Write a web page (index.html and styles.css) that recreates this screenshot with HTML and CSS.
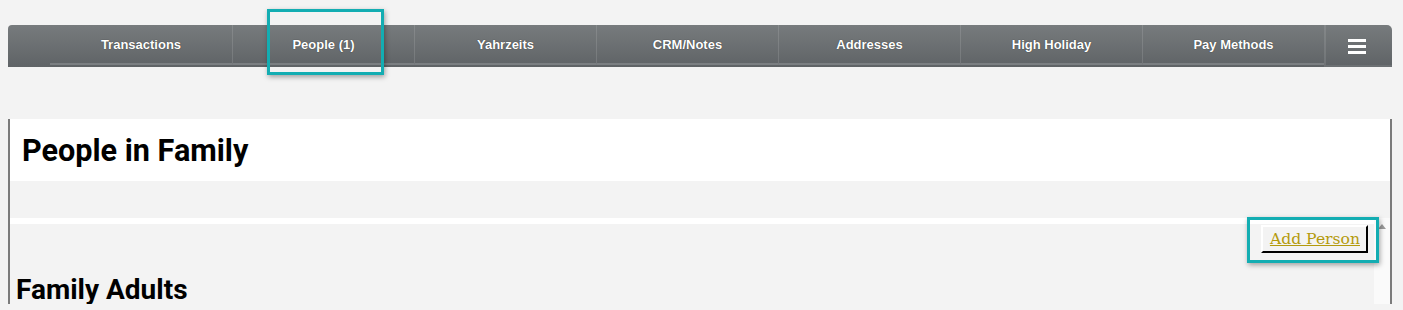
FILE: index.html
```html
<!DOCTYPE html>
<html lang="en">
<head>
  <meta charset="UTF-8" />
  <title>People in Family</title>
  <link rel="stylesheet" href="styles.css">
</head>
<body>
  <div class="page">

    <!-- Tab bar -->
    <nav class="tabs">
      <div class="tabs-lead"></div>
      <ul class="tab-list">
        <li class="tab">Transactions</li>
        <li class="tab active">People (1)<span class="callout callout-tab"></span></li>
        <li class="tab">Yahrzeits</li>
        <li class="tab">CRM/Notes</li>
        <li class="tab">Addresses</li>
        <li class="tab">High Holiday</li>
        <li class="tab">Pay Methods</li>
      </ul>
      <div class="tabs-menu">
        <svg width="18" height="15" viewBox="0 0 18 15">
          <rect x="0" y="0" width="18" height="3" fill="#fff"/>
          <rect x="0" y="6" width="18" height="3" fill="#fff"/>
          <rect x="0" y="12" width="18" height="3" fill="#fff"/>
        </svg>
      </div>
    </nav>

    <!-- Family panel -->
    <section class="family">
      <div class="family-head">
        <h1>People in Family</h1>
      </div>
      <div class="family-gap"></div>
      <div class="family-scroll">
        <div class="family-body">
          <div class="actions">
            <a href="#" class="btn-add">Add Person<span class="callout callout-btn"></span></a>
          </div>
          <h2>Family Adults</h2>
        </div>
        <div class="scroll-track">
          <span class="scroll-up"></span>
        </div>
      </div>
    </section>

  </div>
</body>
</html>
```

FILE: styles.css
```css
body {
  margin: 0;
  background: #f3f3f3;
  font-family: Roboto, Arial, sans-serif;
}

.page {
  padding: 25px 0 0 8px;
}

/* Tab bar */
.tabs {
  display: flex;
  width: 1384px;
  height: 42px;
  background: linear-gradient(#777b7d, #5f6366);
  border-radius: 4px 5px 0 0;
}

.tabs-lead {
  width: 42px;
}

.tab-list {
  display: flex;
  margin: 0;
  padding: 0;
  list-style: none;
}

.tab {
  position: relative;
  width: 181px;
  height: 37px;
  padding-top: 1px;
  border-left: 1px solid rgba(255, 255, 255, 0.12);
  border-bottom: 2px solid #7b7f82;
  display: flex;
  align-items: center;
  justify-content: center;
  color: #fff;
  font-family: "Liberation Sans", Arial, sans-serif;
  font-weight: bold;
  font-size: 13px;
  text-shadow: 0 0 1px rgba(0, 0, 0, 0.7);
}

.tab:first-child {
  border-left: none;
  width: 182px;
}

.tabs-menu {
  flex: 1;
  display: flex;
  align-items: center;
  justify-content: center;
  padding: 2px 4px 0 0;
  border-left: 2px solid rgba(255, 255, 255, 0.1);
  border-bottom: 2px solid #6c7073;
}

/* teal highlight boxes */
.callout {
  position: absolute;
  border: 3px solid #13adb2;
  box-shadow: 1px 2px 5px rgba(0, 0, 0, 0.35);
  pointer-events: none;
}

.callout-tab {
  left: 34px;
  top: -16px;
  width: 111px;
  height: 60px;
}

.callout-btn {
  left: -16px;
  top: -10px;
  width: 126px;
  height: 40px;
}

/* Family panel */
.family {
  width: 1380px;
  margin-top: 52px;
  border-left: 2px solid #7b7b7b;
  border-right: 2px solid #7b7b7b;
}

.family-head {
  height: 62px;
  background: #fff;
  display: flex;
  align-items: center;
  padding-left: 12px;
}

.family-head h1 {
  margin: 0;
  font-size: 30.6px;
  font-weight: bold;
  color: #000;
}

.family-gap {
  height: 37px;
}

.family-scroll {
  display: flex;
}

.family-body {
  flex: 1;
  border-top: 6px solid #fff;
  padding-left: 5px;
}

.actions {
  display: flex;
  justify-content: flex-end;
  padding: 1px 6px 0 0;
}

.btn-add {
  position: relative;
  display: inline-block;
  height: 24px;
  line-height: 24px;
  padding: 0 6px 0 7px;
  border-top: 2px solid #fff;
  border-left: 2px solid #fff;
  border-right: 2px solid #000;
  border-bottom: 2px solid #000;
  color: #b39a0c;
  font-family: "DejaVu Serif", serif;
  font-size: 15.6px;
  text-decoration: underline;
}

.family-body h2 {
  margin: 23px 0 0 1px;
  font-size: 28px;
  line-height: 1;
  font-weight: bold;
  color: #000;
}

.scroll-track {
  width: 16px;
  background: #fafafa;
  padding-top: 6px;
  display: flex;
  justify-content: center;
}

.scroll-up {
  width: 0;
  height: 0;
  border-left: 4px solid transparent;
  border-right: 4px solid transparent;
  border-bottom: 5px solid #9a9a9a;
}
```
